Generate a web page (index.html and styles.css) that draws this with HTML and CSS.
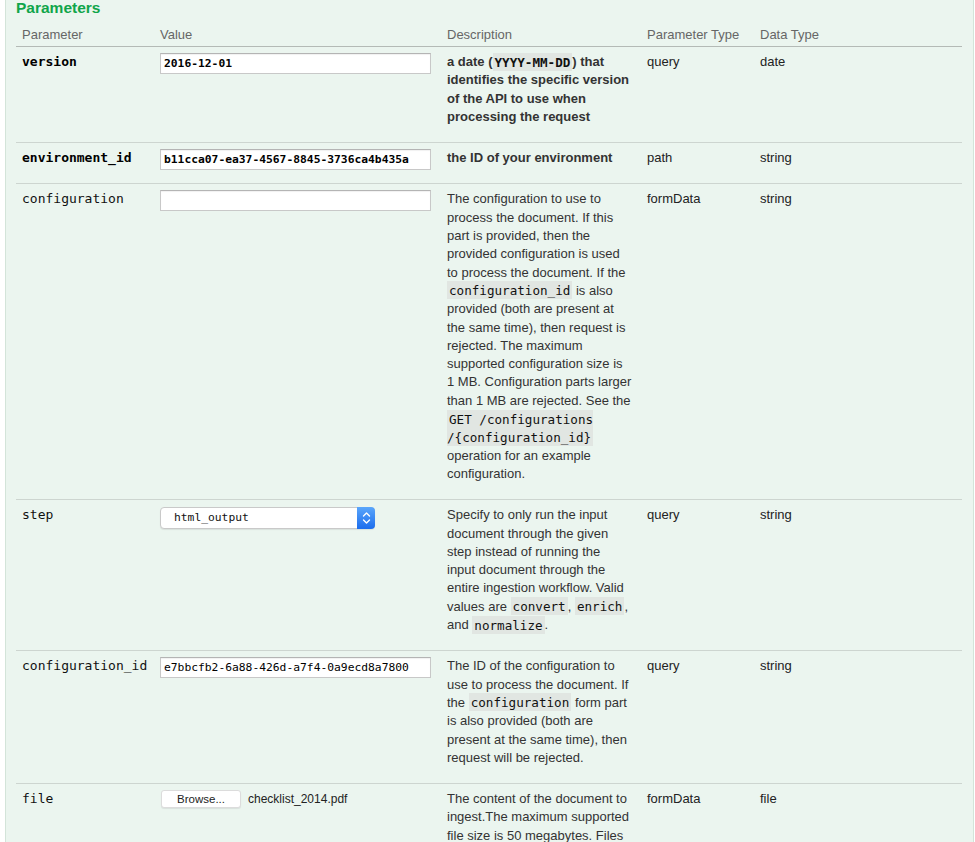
FILE: index.html
```html
<!DOCTYPE html>
<html>
<head>
<meta charset="utf-8">
<title>Parameters</title>
<link rel="stylesheet" href="styles.css">
</head>
<body>
<div class="panel">
  <h4 class="title">Parameters</h4>
  <table class="params">
    <colgroup>
      <col class="c-name">
      <col class="c-value">
      <col class="c-desc">
      <col class="c-ptype">
      <col class="c-dtype">
    </colgroup>
    <thead>
      <tr>
        <th>Parameter</th>
        <th>Value</th>
        <th>Description</th>
        <th>Parameter Type</th>
        <th>Data Type</th>
      </tr>
    </thead>
    <tbody>
      <tr class="required">
        <td class="name">version</td>
        <td class="value"><input class="field" type="text" value="2016-12-01"></td>
        <td class="desc"><p>a date (<code>YYYY-MM-DD</code>) that identifies the specific version of the API to use when processing the request</p></td>
        <td>query</td>
        <td>date</td>
      </tr>
      <tr class="required">
        <td class="name">environment_id</td>
        <td class="value"><input class="field" type="text" value="b11cca07-ea37-4567-8845-3736ca4b435a"></td>
        <td class="desc"><p>the ID of your environment</p></td>
        <td>path</td>
        <td>string</td>
      </tr>
      <tr>
        <td class="name">configuration</td>
        <td class="value"><input class="field" type="text" value=""></td>
        <td class="desc"><p>The configuration to use to process the document. If this part is provided, then the provided configuration is used to process the document. If the <code>configuration_id</code> is also provided (both are present at the same time), then request is rejected. The maximum supported configuration size is 1&nbsp;MB. Configuration parts larger than 1&nbsp;MB are rejected. See the <code>GET /configurations<wbr>/{configuration_id}</code> operation for an example configuration.</p></td>
        <td>formData</td>
        <td>string</td>
      </tr>
      <tr>
        <td class="name">step</td>
        <td class="value">
          <div class="select">
            <span class="select-text">html_output</span>
            <span class="select-arrows">
              <svg width="9" height="14" viewBox="0 0 9 14"><path d="M1.5 5 L4.5 2 L7.5 5 M1.5 9 L4.5 12 L7.5 9" fill="none" stroke="#fff" stroke-width="1.4" stroke-linecap="round" stroke-linejoin="round"/></svg>
            </span>
          </div>
        </td>
        <td class="desc"><p>Specify to only run the input document through the given step instead of running the input document through the entire ingestion workflow. Valid values are <code>convert</code>, <code>enrich</code>, and <code>normalize</code>.</p></td>
        <td>query</td>
        <td>string</td>
      </tr>
      <tr>
        <td class="name">configuration_id</td>
        <td class="value"><input class="field" type="text" value="e7bbcfb2-6a88-426d-a7f4-0a9ecd8a7800"></td>
        <td class="desc"><p>The ID of the configuration to use to process the document. If the <code>configuration</code> form part is also provided (both are present at the same time), then request will be rejected.</p></td>
        <td>query</td>
        <td>string</td>
      </tr>
      <tr>
        <td class="name">file</td>
        <td class="value">
          <div class="file">
            <span class="browse">Browse...</span>
            <span class="filename">checklist_2014.pdf</span>
          </div>
        </td>
        <td class="desc"><p>The content of the document to ingest.The maximum supported file size is 50 megabytes. Files larger than 50 megabytes are rejected.</p></td>
        <td>formData</td>
        <td>file</td>
      </tr>
    </tbody>
  </table>
</div>
</body>
</html>
```

FILE: styles.css
```css
html, body {
  margin: 0;
  padding: 0;
  background: #ffffff;
}

body {
  font-family: "Liberation Sans", Arial, Helvetica, sans-serif;
  font-size: 13px;
  color: #333;
}

.panel {
  margin-left: 5px;
  width: 969px;
  box-sizing: border-box;
  background: #ebf5ef;
  border: 1px solid #d3e4d9;
  border-top: none;
  padding: 0 10px 40px 10px;
}

.title {
  margin: 0 0 8px 0;
  font-size: 15.5px;
  line-height: 16px;
  font-weight: bold;
  color: #10a54a;
}

.params {
  width: 946px;
  table-layout: fixed;
  border-collapse: collapse;
}

.c-name { width: 138px; }
.c-value { width: 287px; }
.c-desc { width: 200px; }
.c-ptype { width: 113px; }
.c-dtype { width: 208px; }

.params th {
  text-align: left;
  font-weight: normal;
  color: #666;
  padding: 2px 6px 2px 6px;
  line-height: 18px;
  border-bottom: 1px solid #b4bab6;
}

.params td {
  vertical-align: top;
  padding: 6px 6px 6px 6px;
  line-height: 18.3px;
  border-top: 1px solid #cdd5d0;
  color: #222;
}

.params tbody tr:first-child td {
  border-top: none;
}

.params td.name {
  font-family: "DejaVu Sans Mono", "Liberation Mono", monospace;
  font-size: 13px;
  color: #111;
}

.params tr.required td.name {
  font-weight: bold;
  color: #000;
}

.params tr.required td.desc {
  font-weight: bold;
}

.desc p {
  margin: 0 0 10px 0;
  max-width: 184.6px;
  color: #333;
}

.desc code {
  font-family: "DejaVu Sans Mono", "Liberation Mono", monospace;
  font-size: 12.6px;
  background: #e1e6e2;
  padding: 1.5px 2px;
  color: #111;
}

.field {
  display: block;
  box-sizing: border-box;
  width: 271px;
  height: 21px;
  margin: 0;
  padding: 0 3px;
  border: 1px solid #c8c8c8;
  border-top-color: #b4b4b4;
  box-shadow: inset 0 1px 1px rgba(0, 0, 0, 0.06);
  background: #fff;
  font-family: "DejaVu Sans Mono", "Liberation Mono", monospace;
  font-size: 11.3px;
  color: #000;
  outline: none;
}

.required .field {
  font-weight: bold;
}

.select {
  display: flex;
  align-items: stretch;
  box-sizing: border-box;
  width: 215px;
  height: 22px;
  margin-top: 1px;
  border: 1px solid #c9c9c9;
  border-radius: 4px;
  background: #fff;
  box-shadow: 0 1px 1px rgba(0, 0, 0, 0.08);
}

.select-text {
  flex: 1;
  padding-left: 13px;
  font-family: "DejaVu Sans Mono", "Liberation Mono", monospace;
  font-size: 11.3px;
  line-height: 20px;
  color: #111;
}

.select-arrows {
  width: 18px;
  margin: -1px -1px -1px 0;
  border-radius: 0 4px 4px 0;
  background: linear-gradient(#5aa6fb, #1c6ded);
  display: flex;
  align-items: center;
  justify-content: center;
}

.select-arrows svg {
  display: block;
}

.file {
  display: flex;
  align-items: center;
  padding-left: 1px;
}

.browse {
  box-sizing: border-box;
  width: 80px;
  height: 18px;
  border-radius: 3px;
  background: #fff;
  border: 1px solid #dcdcdc;
  box-shadow: 0 1px 1px rgba(0, 0, 0, 0.08);
  font-size: 11.5px;
  line-height: 16px;
  text-align: center;
  color: #222;
}

.filename {
  margin-left: 7px;
  font-size: 12px;
  color: #222;
}
```
